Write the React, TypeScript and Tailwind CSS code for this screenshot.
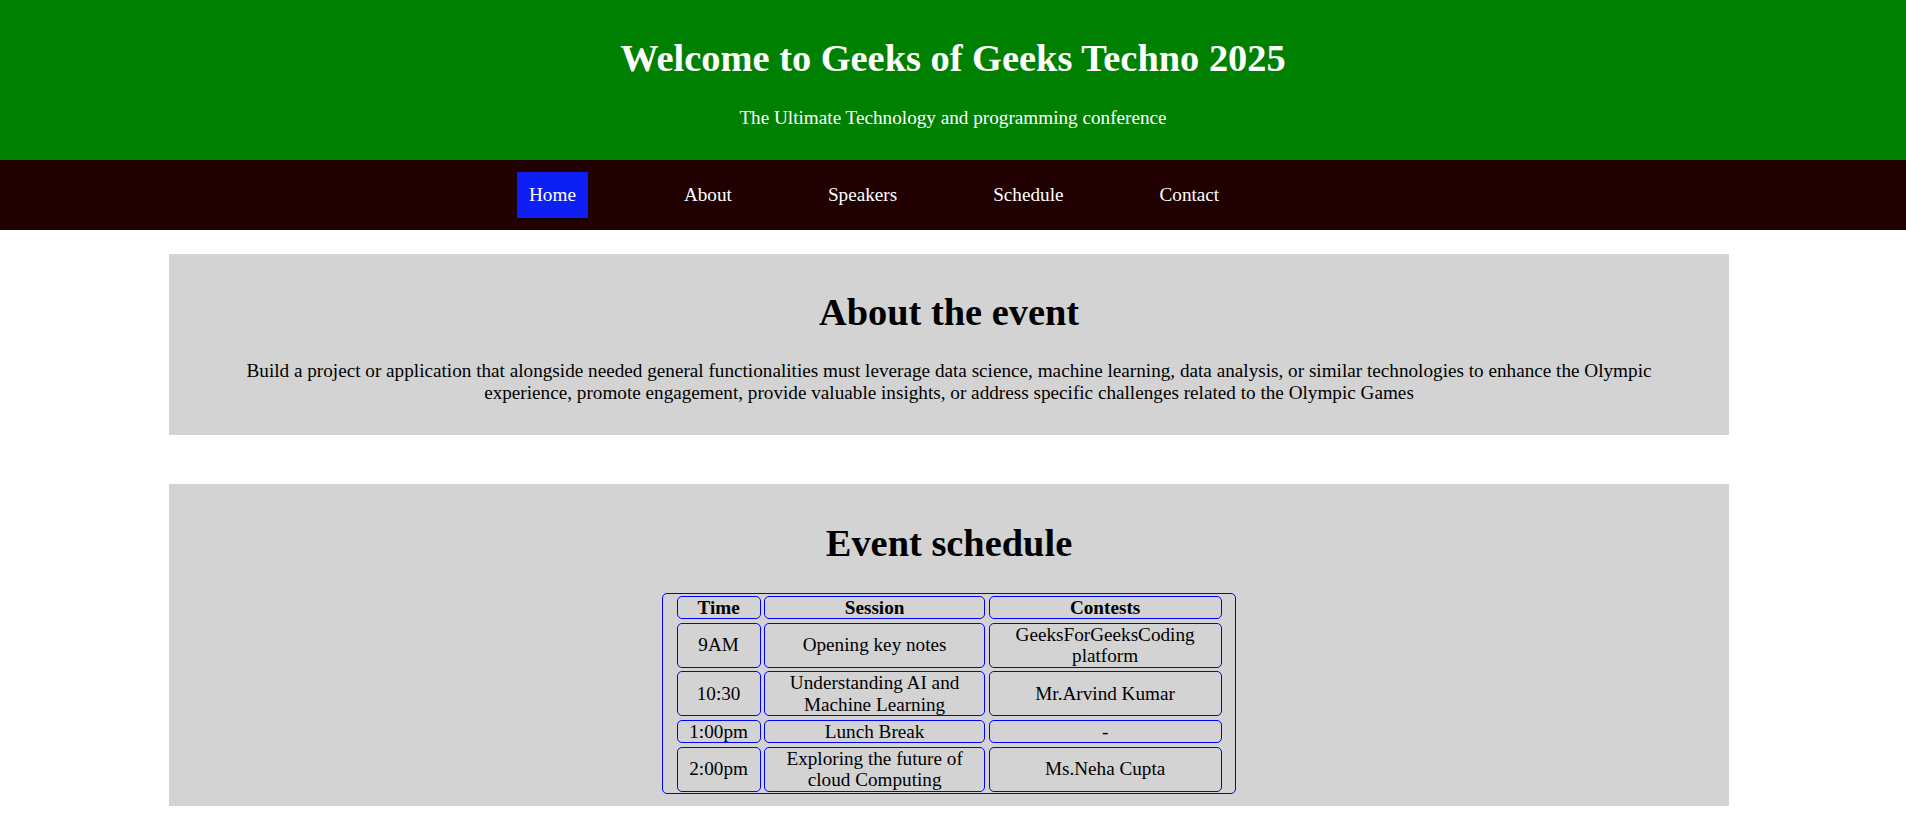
import React from "react";

const rows: [string, string, string][] = [
  ["9AM", "Opening key notes", "GeeksForGeeksCoding platform"],
  ["10:30", "Understanding AI and Machine Learning", "Mr.Arvind Kumar"],
  ["1:00pm", "Lunch Break", "-"],
  ["2:00pm", "Exploring the future of cloud Computing", "Ms.Neha Cupta"],
];

const cell =
  "flex items-center justify-center text-center border border-[#0000ff] rounded-[5px] px-[1px] text-[19.2px] leading-[21.5px]";

export default function App() {
  return (
    <div className="min-h-screen bg-white text-black font-['Liberation_Serif','Times_New_Roman',serif]">
      <header className="h-[160px] bg-[#008000] text-white text-center pt-[36px]">
        <h1 className="text-[38.4px] font-bold leading-[44px]">
          Welcome to Geeks of Geeks Techno 2025
        </h1>
        <p className="mt-[27px] text-[19.2px] leading-[22px]">
          The Ultimate Technology and programming conference
        </p>
      </header>

      <nav className="h-[70px] bg-[#200000] flex items-center pl-[517px] gap-[72px]">
        <a className="mr-[12px] px-[12px] py-[12px] bg-[#0c1ff5] text-white text-[19.2px] leading-[22px]">
          Home
        </a>
        <a className="px-[12px] py-[12px] text-white text-[19.2px] leading-[22px]">About</a>
        <a className="px-[12px] py-[12px] text-white text-[19.2px] leading-[22px]">Speakers</a>
        <a className="px-[12px] py-[12px] text-white text-[19.2px] leading-[22px]">Schedule</a>
        <a className="px-[12px] py-[12px] text-white text-[19.2px] leading-[22px]">Contact</a>
      </nav>

      <main className="pb-[30px]">
        <section className="ml-[169px] w-[1560px] mt-[24px] bg-[#d3d3d3] text-center pt-[36px] pb-[31px]">
          <h2 className="text-[38.4px] font-bold leading-[44px]">About the event</h2>
          <p className="mt-[26px] px-[40px] text-[19.2px] leading-[22px]">
            Build a project or application that alongside needed general functionalities must leverage data
            science, machine learning, data analysis, or similar technologies to enhance the Olympic experience,
            promote engagement, provide valuable insights, or address specific challenges related to the Olympic
            Games
          </p>
        </section>

        <section className="ml-[169px] w-[1560px] mt-[49px] bg-[#d3d3d3] text-center pt-[37px] pb-[12px]">
          <h2 className="text-[38.4px] font-bold leading-[44px]">Event schedule</h2>
          <div className="mx-auto mt-[28px] w-[574px] border border-[#0000ff] rounded-[5px] pt-[1.6px] pb-[1px] px-[13.6px]">
            <div className="grid grid-cols-[84px_221px_233px] gap-x-[3.5px] gap-y-[3.5px]">
              <div className={cell + " font-bold"}>Time</div>
              <div className={cell + " font-bold"}>Session</div>
              <div className={cell + " font-bold"}>Contests</div>
              {rows.map((r, i) => (
                <React.Fragment key={i}>
                  <div className={cell}>{r[0]}</div>
                  <div className={cell}>{r[1]}</div>
                  <div className={cell}>{r[2]}</div>
                </React.Fragment>
              ))}
            </div>
          </div>
        </section>
      </main>
    </div>
  );
}
